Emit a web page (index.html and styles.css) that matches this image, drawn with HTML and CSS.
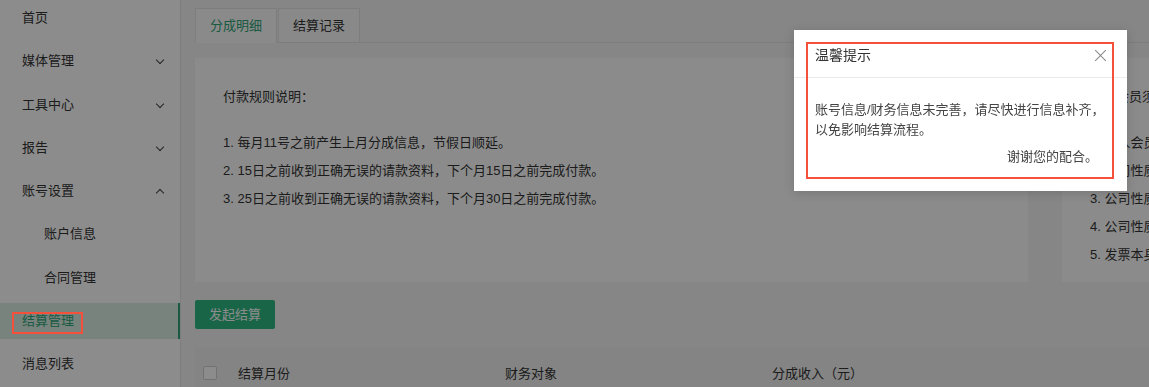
FILE: index.html
```html
<!DOCTYPE html>
<html lang="zh-CN">
	<head>
		<meta charset="UTF-8">
		<title>结算管理</title>
		<link rel="stylesheet" href="styles.css">
	</head>
	<body>
		<div class="layout">
			<ul class="side">
				<li><a href="#" class="side-item">首页</a></li>
				<li><a href="#" class="side-item">媒体管理<i class="arrow"></i></a></li>
				<li><a href="#" class="side-item">工具中心<i class="arrow"></i></a></li>
				<li><a href="#" class="side-item">报告<i class="arrow"></i></a></li>
				<li><a href="#" class="side-item">账号设置<i class="arrow up"></i></a></li>
				<li><a href="#" class="side-item sub">账户信息</a></li>
				<li><a href="#" class="side-item sub">合同管理</a></li>
				<li><a href="#" class="side-item active">结算管理</a></li>
				<li><a href="#" class="side-item">消息列表</a></li>
			</ul>

			<div class="main">
				<ul class="tabs">
					<li class="tab current">分成明细</li>
					<li class="tab">结算记录</li>
				</ul>

				<div class="cards">
					<div class="card">
						<p class="card-title">付款规则说明：</p>
						<ol class="rules">
							<li>1. 每月11号之前产生上月分成信息，节假日顺延。</li>
							<li>2. 15日之前收到正确无误的请款资料，下个月15日之前完成付款。</li>
							<li>3. 25日之前收到正确无误的请款资料，下个月30日之前完成付款。</li>
						</ol>
					</div>
					<div class="card">
						<p class="card-title">请款会员须知：</p>
						<ol class="rules">
							<li>1. 个人会员需提供身份证正反面照片。</li>
							<li>2. 公司性质会员需提供营业执照。</li>
							<li>3. 公司性质会员需提供对公账户信息。</li>
							<li>4. 公司性质会员需开具增值税发票。</li>
							<li>5. 发票本身需与合同主体一致。</li>
						</ol>
					</div>
				</div>

				<a href="#" class="btn">发起结算</a>

				<div class="table-head">
					<span class="check"></span>
					<span>结算月份</span>
					<span>财务对象</span>
					<span>分成收入（元）</span>
				</div>
			</div>
		</div>

		<!-- 遮罩 + 提示框 -->
		<div class="mask"></div>
		<div class="mark side-mark"></div>
		<div class="dialog">
			<div class="dialog-head">
				温馨提示
				<span class="close"></span>
			</div>
			<div class="dialog-body">
				<p>账号信息/财务信息未完善，请尽快进行信息补齐，<br>以免影响结算流程。</p>
				<p class="thanks">谢谢您的配合。</p>
			</div>
			<div class="mark dialog-mark"></div>
		</div>
	</body>
</html>
```

FILE: styles.css
```css
*{
	margin: 0;
	padding: 0;
	box-sizing: border-box;
}
html,body{
	height: 100%;
	overflow: hidden;
}
body{
	font-family: "Liberation Sans", "Noto Sans CJK SC", sans-serif;
	font-size: 13px;
	color: #333;
	background: #fff;
}
a{
	text-decoration: none;
	color: inherit;
}
ul,ol{
	list-style: none;
}

.layout{
	display: flex;
	height: 100%;
}

/* 左侧菜单 */
.side{
	width: 181px;
	flex-shrink: 0;
	border-right: 1px solid #e6e6e6;
	display: flex;
	flex-direction: column;
	gap: 7.3px;
}
.side-item{
	height: 36px;
	line-height: 36px;
	padding-left: 22px;
	display: block;
	position: relative;
}
.side-item.sub{
	padding-left: 44px;
}
.side-item.active{
	background: #dcefe4;
	color: #2ea578;
	border-right: 2px solid #2ea578;
}
.arrow{
	position: absolute;
	left: 157px;
	top: 14px;
	width: 6px;
	height: 6px;
	border-right: 1.3px solid #444;
	border-bottom: 1.3px solid #444;
	transform: rotate(45deg);
}
.arrow.up{
	top: 17px;
	transform: rotate(-135deg);
}

/* 右侧内容 */
.main{
	flex: 1;
	background: #f4f4f4;
	padding: 8px 0 0 14px;
	min-width: 0;
}
.tabs{
	display: flex;
	height: 35px;
	border-bottom: 1px solid #e4e4e4;
	width: 1100px;
}
.tab{
	width: 82px;
	margin-right: 1px;
	text-align: center;
	line-height: 34px;
	border: 1px solid #e4e4e4;
	border-bottom: none;
	background: #f9f9f9;
	color: #333;
}
.tab.current{
	color: #2ea578;
	background: #fbfbfb;
	height: 35px;
}

.cards{
	display: grid;
	grid-template-columns: 833px 400px;
	gap: 34px;
	margin-top: 15px;
}
.card{
	background: #fdfdfd;
	height: 224px;
	padding: 29px 28px 0;
}
.card-title{
	line-height: 20px;
	margin-bottom: 22px;
}
.rules li{
	line-height: 28px;
	white-space: nowrap;
}

.btn{
	display: block;
	width: 80px;
	height: 29px;
	line-height: 29px;
	margin-top: 18px;
	text-align: center;
	color: #fff;
	background: #2eb983;
	border-radius: 2px;
}

.table-head{
	display: grid;
	grid-template-columns: 43px 267px 267px 1fr;
	align-items: center;
	height: 50px;
	margin-top: 18px;
	background: #f0f0f0;
	width: 1100px;
}
.check{
	width: 14px;
	height: 14px;
	margin-left: 8px;
	margin-top: 1px;
	border: 1px solid #d0d0d0;
	border-radius: 2px;
	background: #fff;
}

/* 遮罩和弹窗 */
.mask{
	position: fixed;
	left: 0;
	top: 0;
	right: 0;
	bottom: 0;
	background: rgba(0,0,0,.45);
}
.dialog{
	position: absolute;
	left: 794px;
	top: 30px;
	width: 333px;
	height: 161px;
	background: #fff;
	box-shadow: 0 2px 10px rgba(0,0,0,.15);
}
.dialog-head{
	height: 48px;
	line-height: 50px;
	padding-left: 21px;
	font-size: 14px;
	color: #333;
	border-bottom: 1px solid #ececec;
	position: relative;
}
.close{
	position: absolute;
	right: 21px;
	top: 20px;
	width: 11px;
	height: 11px;
}
.close:before,.close:after{
	content: "";
	position: absolute;
	left: -2px;
	top: 5px;
	width: 15px;
	height: 1px;
	background: #888;
	transform: rotate(45deg);
}
.close:after{
	transform: rotate(-45deg);
}
.dialog-body{
	padding: 22px 29px 0 21px;
	color: #444;
	line-height: 20px;
	white-space: nowrap;
}
.thanks{
	text-align: right;
	margin-top: 7px;
}

/* 红色标注框 */
.mark{
	position: absolute;
	border: 2px solid #f4503c;
}
.side-mark{
	left: 12px;
	top: 312px;
	width: 71px;
	height: 22px;
}
.dialog-mark{
	left: 12px;
	top: 12px;
	right: 13px;
	bottom: 12px;
}
```
